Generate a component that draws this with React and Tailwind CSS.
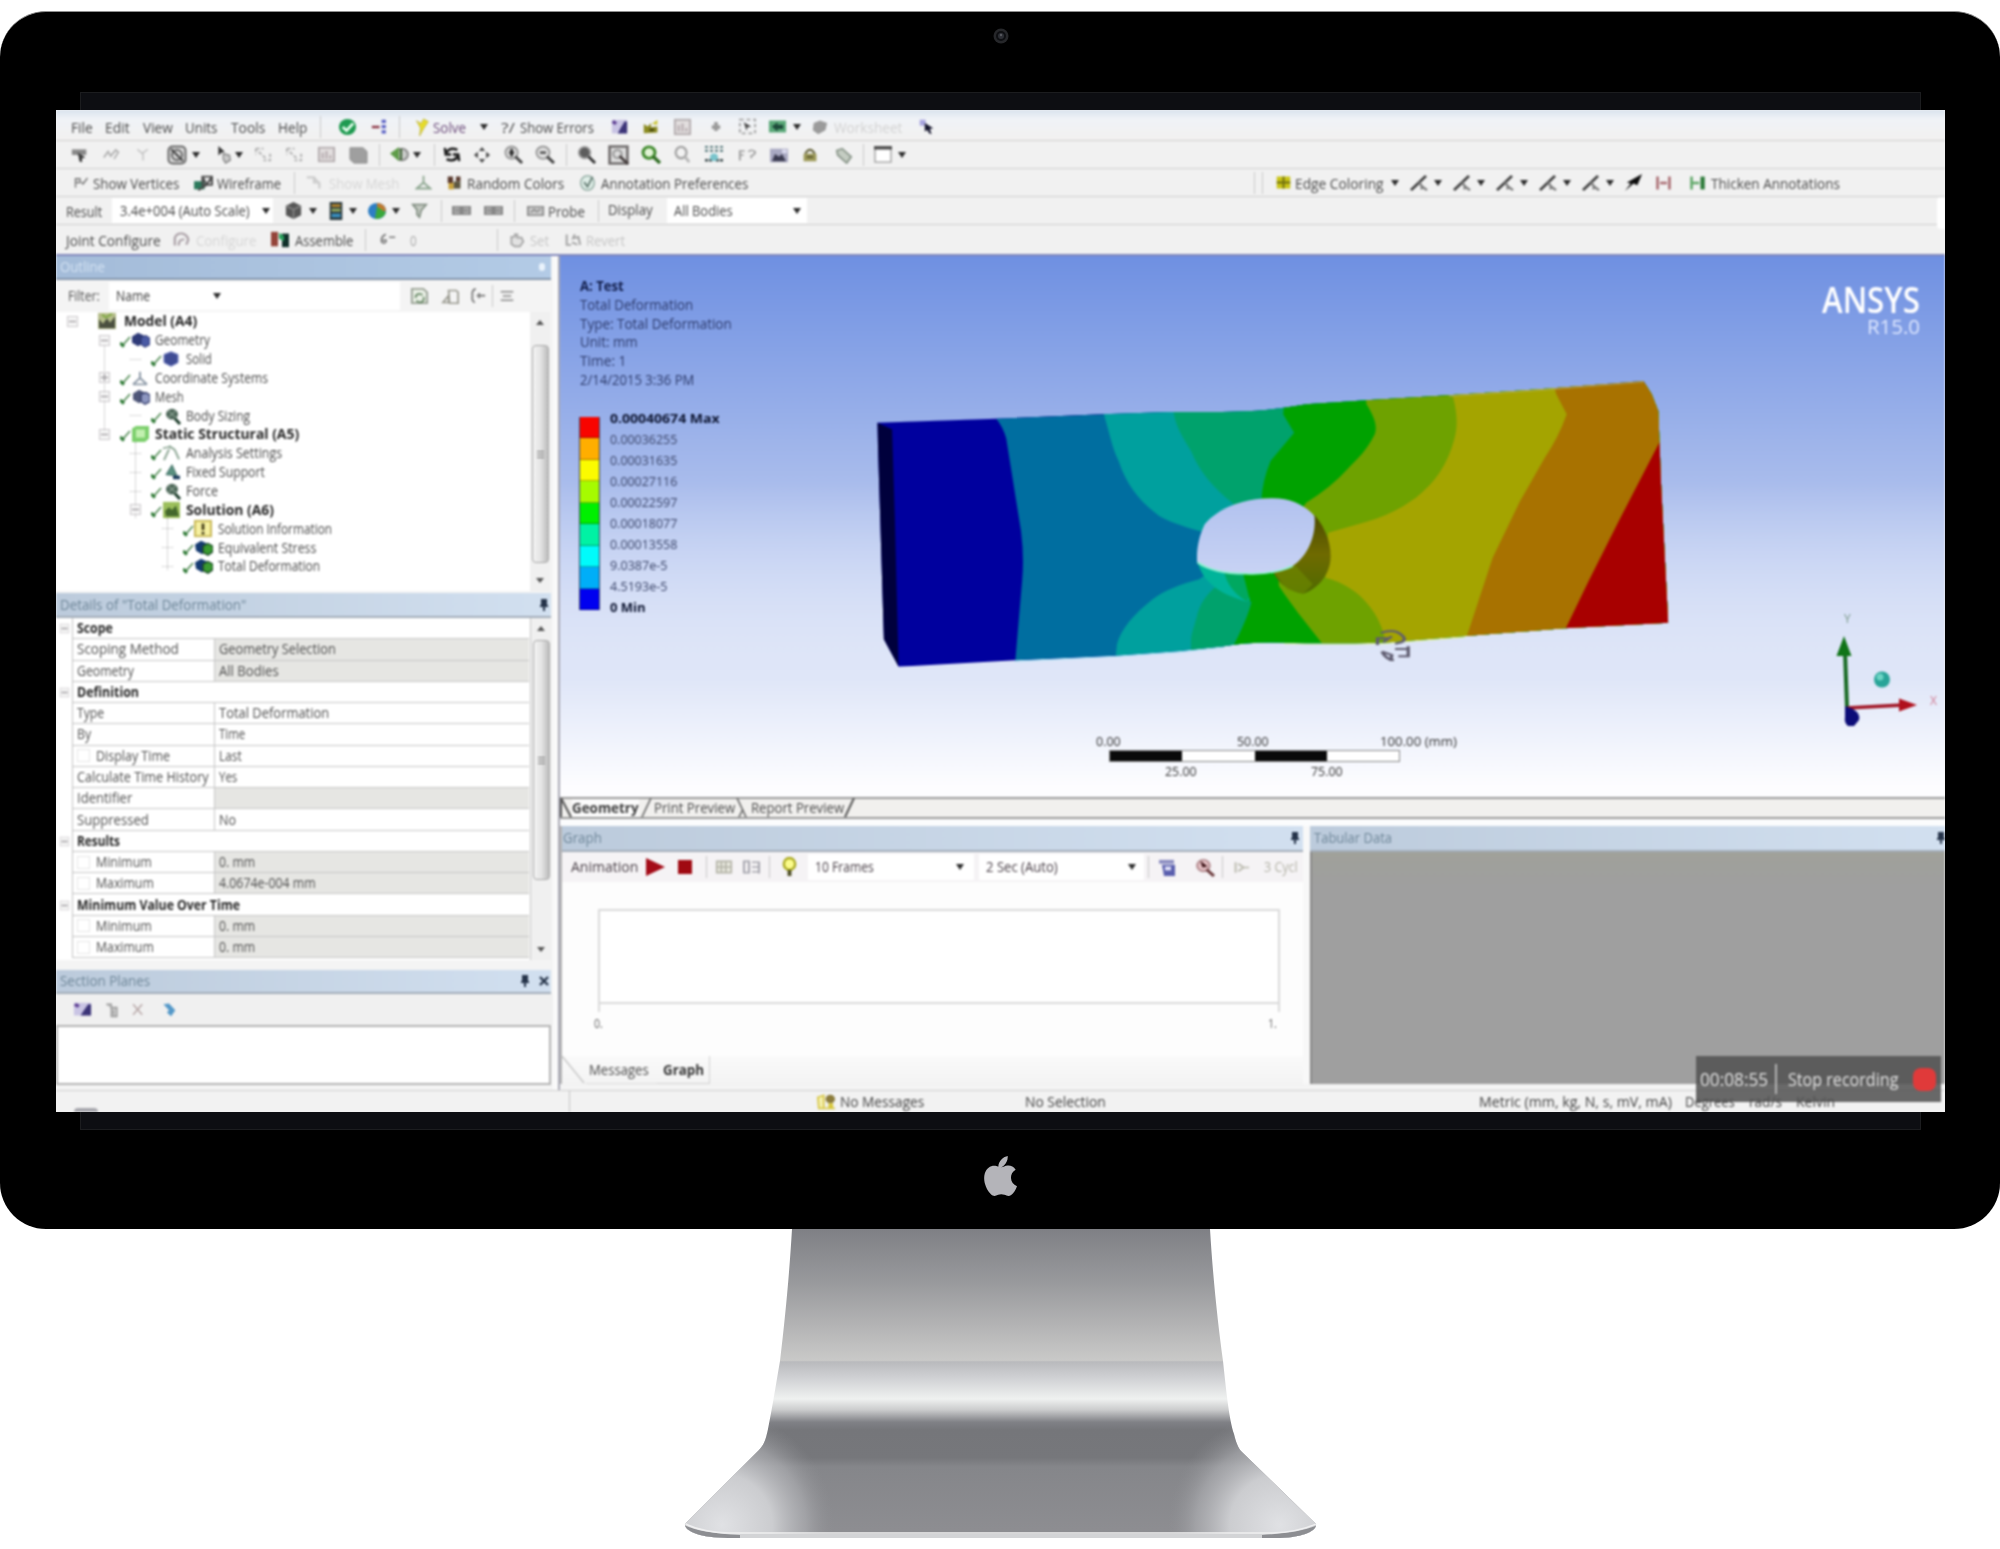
import { useLayoutEffect, useRef, useState } from "react";

/* Single-line label squeezed or stretched to the width of its box. */
function T({ className = "", children }) {
  const box = useRef(null);
  const txt = useRef(null);
  const [k, setK] = useState(1);
  useLayoutEffect(() => {
    if (txt.current && txt.current.offsetWidth) {
      setK(box.current.offsetWidth / txt.current.offsetWidth);
    }
  }, []);
  return (
    <span ref={box} className={"block shrink-0 whitespace-nowrap leading-[18px] " + className}>
      <span ref={txt} className="inline-block origin-left" style={{ transform: `scaleX(${k})` }}>
        {children}
      </span>
    </span>
  );
}

const GLYPHS = {
  check: (
    <>
      <circle cx="10" cy="10" r="9" fill="#1e9a50" />
      <path d="M5 10l4 4 7-8" stroke="#e8fff0" strokeWidth="3" fill="none" />
    </>
  ),
  branch: (
    <>
      <path d="M1 10h9" stroke="#8a3444" strokeWidth="3" />
      <path d="M15 1v18" stroke="#5a60c4" strokeWidth="5" strokeDasharray="4 2.500" />
    </>
  ),
  bolt: <path d="M3 3l6 3 3-5 6 3-6 8-5 8 1-9z" fill="#e6dc28" stroke="#c2b850" />,
  newplane: (
    <>
      <rect x="1" y="1" width="18" height="17" fill="#c9c4e4" />
      <path d="M19 3v15H8l3-6 5-9z" fill="#3c3478" />
      <path d="M2 3l4 3" stroke="#5c3c90" strokeWidth="4" />
    </>
  ),
  chart: (
    <>
      <path d="M1 18V7l5 3 4-4v5l8-1v7z" fill="#8c8c22" />
      <path d="M11 7l7-5v6z" fill="#c9c430" />
      <path d="M8 14h6" stroke="#44440c" strokeWidth="3" />
    </>
  ),
  page: (
    <>
      <rect x="2" y="2" width="16" height="16" fill="#e2dede" stroke="#b3acae" strokeWidth="2" />
      <path d="M6 8v7M10 6v9M14 11v4" stroke="#b3a8ac" strokeWidth="2" />
    </>
  ),
  plus: <path d="M10 3v14M3 11h14" stroke="#9a9a9a" strokeWidth="6" />,
  cursorbox: (
    <>
      <rect x="2" y="2" width="16" height="16" fill="none" stroke="#a3a3a3" strokeWidth="2" strokeDasharray="4 3" />
      <path d="M6 5l8 5-4 1-1 4z" fill="#444" />
    </>
  ),
  green: (
    <>
      <rect x="1" y="3" width="18" height="14" fill="#5aa878" />
      <path d="M4 10l6-5v3h6v5h-6v3z" fill="#1d4a3a" />
    </>
  ),
  sheet: <path d="M3 5l7-3 8 3-2 9-8 5-6-5z" fill="#9b9b9b" />,
  help: (
    <>
      <path d="M2 2h7v7H2z" fill="#a9a6e0" />
      <path d="M8 6l10 6-4 1 2 6-3-1-2-4-3 2z" fill="#16162e" />
    </>
  ),
  select: (
    <>
      <path d="M1 3h17v7H1z" fill="#8a8a8a" />
      <path d="M8 7l9 6-4 1v5l-3-1z" fill="#3b3b3b" />
    </>
  ),
  faint: <path d="M1 14l5-8 3 6 6-8 3 3-5 9" stroke="#adadad" strokeWidth="2" fill="none" />,
  faint2: <path d="M3 3l6 5 7-5M10 8v9" stroke="#c6c6c6" strokeWidth="2" fill="none" />,
  cube: (
    <>
      <rect x="1.5" y="1.5" width="17" height="17" rx="4" fill="#d9d9d9" stroke="#6a6a6a" strokeWidth="2" />
      <circle cx="10" cy="10" r="5" fill="none" stroke="#666" strokeWidth="2" />
      <path d="M4 4l12 12" stroke="#444" strokeWidth="2" />
    </>
  ),
  pick: (
    <>
      <path d="M3 1l8 6-4 1-4 3z" fill="#333" />
      <path d="M9 9l8 2 1 5-6 3-3-4z" fill="#c9c9c9" stroke="#8a8a8a" strokeWidth="1.600" />
    </>
  ),
  dots: (
    <>
      <path d="M2 3h8M2 3v7M5 7l8 8M17 9v8h-7" stroke="#b0b0b0" strokeWidth="2" fill="none" strokeDasharray="4 2" />
    </>
  ),
  solid: <path d="M2 2h13l4 4v13H6l-4-4z" fill="#9f9f9f" stroke="#8c8c8c" />,
  plane: (
    <>
      <circle cx="13" cy="10" r="6" fill="#c9cbc9" stroke="#8d8d8d" strokeWidth="2" />
      <path d="M1 9l9-7v15z" fill="#5e9c48" />
      <path d="M12 4v12" stroke="#3b6030" strokeWidth="2" />
    </>
  ),
  rotate: (
    <path d="M4 8q3-6 12-3M16 12q-3 6-12 3M2 3l1 7h6M18 17l-1-7h-6" stroke="#161616" strokeWidth="2.600" fill="none" />
  ),
  move: (
    <path d="M10 1l3.500 4.500h-7zM10 19l3.500-4.500h-7zM1 10l4.500-3.500v7zM19 10l-4.500-3.500v7z" fill="#4b4b4b" />
  ),
  zoomin: (
    <>
      <circle cx="8" cy="8" r="6.500" fill="#d8d8d8" stroke="#9b9b9b" strokeWidth="2" />
      <path d="M8 4v8M5.500 8h5" stroke="#222" strokeWidth="2.400" />
      <path d="M12 12l7 7" stroke="#444" strokeWidth="3" />
    </>
  ),
  zoomout: (
    <>
      <circle cx="8" cy="8" r="6.500" fill="#e0e0e0" stroke="#9b9b9b" strokeWidth="2" />
      <path d="M5 8h6" stroke="#444" strokeWidth="2.400" />
      <path d="M12 12l7 7" stroke="#444" strokeWidth="3" />
    </>
  ),
  zoomdark: (
    <>
      <circle cx="8" cy="8" r="6" fill="#5c5c5c" stroke="#9a9a9a" strokeWidth="2" />
      <path d="M12 12l7 7" stroke="#333" strokeWidth="3" />
    </>
  ),
  zoombox: (
    <>
      <rect x="1.500" y="1.500" width="17" height="17" fill="#ddd" stroke="#6c6868" strokeWidth="2.400" />
      <circle cx="9" cy="9" r="4" fill="none" stroke="#999" strokeWidth="2" />
      <path d="M11 11l8 8" stroke="#443c3c" strokeWidth="2.500" />
    </>
  ),
  zoomgreen: (
    <>
      <circle cx="8" cy="8" r="6" fill="#e2f4d6" stroke="#3f8a2c" strokeWidth="3" />
      <path d="M12 12l7 7" stroke="#2d6b20" strokeWidth="3.500" />
    </>
  ),
  zoomgray: (
    <>
      <circle cx="9" cy="8" r="6" fill="#f2f2f2" stroke="#a3a3a3" strokeWidth="2.500" />
      <path d="M13 12l5 6" stroke="#b5b5b5" strokeWidth="3" />
    </>
  ),
  grid: (
    <>
      <path d="M1 2h18M1 6h18" stroke="#4a6f72" strokeWidth="2" strokeDasharray="3 2" />
      <path d="M1 16h7M12 16h7" stroke="#3b4a4c" strokeWidth="2.500" strokeDasharray="3 1" />
      <circle cx="10" cy="13" r="4" fill="#79c4cc" />
    </>
  ),
  fq: <path d="M2 17V5h5M2 10h4M11 6q3-4 7 0q0 4-4 5v3" stroke="#9f9f9f" strokeWidth="2" fill="none" />,
  photo: (
    <>
      <rect x="1" y="3" width="18" height="15" fill="#a9a9c2" />
      <path d="M3 17l3-8 4 3 3-3 4 8z" fill="#3b3b50" />
      <path d="M13 4h5v4h-5z" fill="#dcdcf0" />
    </>
  ),
  box: (
    <>
      <path d="M2 9h16v9H2z" fill="#9d9a58" />
      <path d="M4 9q6-9 12 0M6 13h8" stroke="#5e5c32" strokeWidth="2.400" fill="none" />
    </>
  ),
  tag: <path d="M2 5l6-2 10 9-5 7L3 10z" fill="#c4ccc2" stroke="#8c988c" strokeWidth="2" />,
  win: (
    <>
      <rect x="2" y="2" width="16" height="16" fill="#fff" stroke="#a6a6a6" strokeWidth="1.500" />
      <path d="M1 3h18" stroke="#4a4a4a" strokeWidth="3.500" />
    </>
  ),
  pv: <path d="M2 17V5h6v5H2M10 9l2 3 6-8" stroke="#777" strokeWidth="1.800" fill="none" />,
  wire: (
    <>
      <path d="M1 8h10v9H1z" fill="#2c7a5c" />
      <path d="M9 3h9v9H9zM9 3l4 9M18 3l-5 9-8 6" stroke="#4b4b4b" strokeWidth="2" fill="none" />
    </>
  ),
  mesh: <path d="M2 4h8l6 8v5M10 4v6h7" stroke="#cdcdcd" strokeWidth="2.500" fill="none" />,
  axes: <path d="M10 2v8l-8 7h16l-8-7" stroke="#8fa892" strokeWidth="2.200" fill="none" />,
  random: (
    <>
      <path d="M1 2h7v8H1zM12 2h6v6h-6z" fill="#5a3a2e" />
      <path d="M2 10h7v8H2z" fill="#c9a23a" />
      <path d="M9 8h9v9H9z" fill="#5c5640" />
    </>
  ),
  pref: (
    <>
      <circle cx="10" cy="10" r="8" fill="#dfeee8" stroke="#98b0a7" strokeWidth="1.800" />
      <path d="M6 9l4 5 6-11" stroke="#60786f" strokeWidth="2" fill="none" />
    </>
  ),
  yellow: (
    <>
      <rect x="1" y="2" width="18" height="16" fill="#c9c416" />
      <path d="M10 2v16M1 10h18" stroke="#6f6e10" strokeWidth="2.500" />
    </>
  ),
  pen: (
    <>
      <path d="M1 18L16 2" stroke="#3f3f3f" strokeWidth="2.800" />
      <path d="M9 9l3 5 5 4M11 17l2-4" stroke="#7c7c7c" strokeWidth="2.400" fill="none" />
    </>
  ),
  arrow: <path d="M1 19l6-8-4-1L19 1l-5 12-4-2z" fill="#0c0c0c" />,
  hred: <path d="M3 2v16M17 2v16M6 10h8" stroke="#a86a70" strokeWidth="3" fill="none" />,
  hgreen: (
    <>
      <path d="M3 2v16M3 10h9" stroke="#5fa868" strokeWidth="3" />
      <path d="M16 2v16" stroke="#2b7a38" strokeWidth="5" />
    </>
  ),
  hex: (
    <>
      <path d="M10 1l8 4v10l-8 4-8-4V5z" fill="#565656" />
      <path d="M2 5l8 4 8-4M10 9v10" stroke="#8a8a8a" strokeWidth="1.500" fill="none" />
    </>
  ),
  bands: (
    <>
      <rect x="3" y="0" width="14" height="20" fill="#2b3b40" />
      <path d="M5 4h10" stroke="#b8862a" strokeWidth="3" />
      <path d="M5 9h10" stroke="#9ab060" strokeWidth="3" />
      <path d="M5 15h10" stroke="#3a90c0" strokeWidth="4" />
    </>
  ),
  ball: (
    <>
      <circle cx="10" cy="10" r="9" fill="#2d7ec4" />
      <path d="M10 1a9 9 0 0 1 9 9l-9 2z" fill="#c07a30" />
      <path d="M8 19l2-14 9 7q-3 7-11 7z" fill="#39a83a" />
    </>
  ),
  filter: <path d="M2 3h16l-6 7-2 8-3-3V9z" fill="#c2c8c0" stroke="#7c897c" strokeWidth="1.800" />,
  lbl: <path d="M1 4h8v12H1zM11 4h8v12h-8zM3 10h14" fill="#aaa" stroke="#868686" strokeWidth="2" />,
  probe: <path d="M1 4h17v12H1zM4 12l4-4 3 3 4-4" fill="#ccc" stroke="#8b8b8b" strokeWidth="2" />,
  cfg: <path d="M3 17V8q2-6 8-5 6 2 6 8l-2 5M7 17q0-8 6-7" fill="none" stroke="#aca2a8" strokeWidth="2.400" />,
  asm: (
    <>
      <path d="M1 1h7v17H1z" fill="#94443a" />
      <path d="M12 3h7v16h-7z" fill="#10302a" />
      <path d="M9 2l5 4v6l-5-3z" fill="#2aa05c" />
    </>
  ),
  six: <path d="M8 3q-6 3-5 10 3 4 5 0t-5-1M12 7h7" fill="none" stroke="#777" strokeWidth="2" />,
  hand: <path d="M4 15V6h4V3h3v4h5l2 5-4 6H8z" fill="#e2e2e2" stroke="#a3a3a3" strokeWidth="2" />,
  rev: <path d="M3 3v13h5M12 3l-2 5 6-2 2 10M9 13l6 3" fill="none" stroke="#a3a3a3" strokeWidth="2.200" />,
  refresh: (
    <>
      <path d="M2 2h12l4 4v12H2z" fill="#eaf0e6" stroke="#9aa296" strokeWidth="2" />
      <path d="M6 12a4 4 0 0 1 7-3M14 11a4 4 0 0 1-7 4" stroke="#6a8a68" strokeWidth="2" fill="none" />
    </>
  ),
  copy: <path d="M8 3h8l2 2v13H9zM2 17l6-8v8z" fill="#f4f4f4" stroke="#9a9a90" strokeWidth="1.800" />,
  tree: <path d="M8 1q-5 1-4 8-1 7 3 8M9 9h10M12 6v6" fill="none" stroke="#777" strokeWidth="2" />,
  minus: <path d="M1 4h18M1 16h18M4 10h12" stroke="#888" strokeWidth="2" />,
  frames: <path d="M2 3h16v14H2zM7 3v14M12 3v14M2 10h16" fill="#ecece2" stroke="#b4b4a8" strokeWidth="2" />,
  list: <path d="M3 3h5v14H3zM11 4h7M11 10h7M11 16h7M18 3v15" fill="none" stroke="#a6a6ae" strokeWidth="2" />,
  bulb: (
    <>
      <circle cx="10" cy="7" r="6" fill="#fbfb8c" stroke="#a9a81c" strokeWidth="2.400" />
      <path d="M8 13h4v6H8z" fill="#4a4a20" />
    </>
  ),
  save: (
    <>
      <path d="M2 2h15v4H2z" fill="#8a8cc0" />
      <path d="M5 7h13v12H7z" fill="#5a5fae" />
      <path d="M8 9h6v4H8z" fill="#e4e4fa" />
    </>
  ),
  zoomred: (
    <>
      <circle cx="9" cy="8" r="6" fill="#e8c4c8" stroke="#b48c90" strokeWidth="2" />
      <path d="M6 3l7 6-5 1z" fill="#3b1014" />
      <path d="M12 12l7 7" stroke="#6b3a3c" strokeWidth="3" />
    </>
  ),
  skip: <path d="M4 3v14M7 5l6 5-6 5M13 10h6" fill="none" stroke="#bcbcb0" strokeWidth="2.200" />,
  msg: (
    <>
      <path d="M1 5l6-2v15H2zM7 18h12" fill="#f8f4b8" stroke="#d8c84a" strokeWidth="2" />
      <circle cx="14" cy="7" r="5" fill="#8c7c3c" />
      <path d="M12 12h5v6h-5z" fill="#d8c83a" />
    </>
  ),
  del: <path d="M3 3l13 14M16 3L3 17" stroke="#b8a8a8" strokeWidth="2.200" />,
  blue: <path d="M2 3l8-1 9 9-6 8-6-5 3-3z" fill="#5498c8" />,
  copy2: <path d="M2 3h7v6M9 7h8v11H9zM12 10v6" fill="#ccc" stroke="#9b9b9b" strokeWidth="2" />,
  /* outline tree */
  model: (
    <>
      <rect x="1" y="1" width="18" height="18" fill="#b5bd8a" />
      <path d="M2 8l4 5 4-6 3 5 5-7v13H2z" fill="#4b5040" />
      <path d="M5 3l4 3 6-4" stroke="#7ea840" strokeWidth="2" fill="none" />
    </>
  ),
  geo: (
    <>
      <path d="M2 6l6-4 6 3v8l-6 4-6-4z" fill="#2e3a78" />
      <path d="M11 7l5-2 4 3v7l-5 3-4-3z" fill="#4a5aa4" stroke="#27306a" />
    </>
  ),
  sol: <path d="M10 2l7 3v9l-7 4-7-4V5z" fill="#3f4c94" stroke="#6c78c0" />,
  csys: <path d="M10 3v7l-7 7M10 10l7 7M3 17h14" stroke="#8e9aa8" strokeWidth="2" fill="none" />,
  meshi: (
    <>
      <path d="M3 6l6-4 6 3v8l-6 4-6-4z" fill="#4e5678" />
      <path d="M11 7l5-2 4 3v7l-5 3-4-3z" fill="#8d96c0" stroke="#3a4270" strokeWidth="1.500" />
    </>
  ),
  sizing: (
    <>
      <circle cx="11" cy="8" r="6" fill="#4c6658" />
      <path d="M7 4l8 8M15 4l-8 8" stroke="#a3b8a8" />
      <path d="M14 13l5 6" stroke="#1a3a28" strokeWidth="3" />
    </>
  ),
  static: (
    <>
      <path d="M2 4l4-3h13v14l-4 4H2z" fill="#7ccf6c" />
      <rect x="6" y="5" width="9" height="9" fill="#c2f0b0" />
    </>
  ),
  settings: <path d="M2 5q8-4 12 2l4 10M8 6L3 18M8 2l5 4" stroke="#8fa896" strokeWidth="2" fill="none" />,
  support: (
    <>
      <path d="M5 13l6-11 5 12z" fill="#5a9080" stroke="#3b6a60" />
      <path d="M12 14h7v4h-7z" fill="#1c3c5c" />
    </>
  ),
  solution: (
    <>
      <rect x="2" y="1" width="17" height="18" fill="#9cbf5c" />
      <path d="M4 11l4-4 3 3 4-5 3 12H5z" fill="#44682c" />
    </>
  ),
  info: (
    <>
      <rect x="2" y="1" width="16" height="17" fill="#f6f0a0" stroke="#c8b858" strokeWidth="2" />
      <path d="M10 4v7M10 13v3" stroke="#3b3410" strokeWidth="2.600" />
    </>
  ),
  result: (
    <>
      <path d="M2 6l6-4 6 3v8l-5 4-6-4z" fill="#143a70" />
      <path d="M10 8l5-3 5 3v6l-5 4-5-3z" fill="#3a9a30" stroke="#1c4a28" strokeWidth="1.500" />
    </>
  ),
};

function Ico({ n, className = "" }) {
  return (
    <svg viewBox="0 0 20 20" preserveAspectRatio="none" className={"block shrink-0 " + className}>
      {GLYPHS[n]}
    </svg>
  );
}
function Caret({ className = "" }) {
  return (
    <svg viewBox="0 0 8 6" className={"block h-[6px] w-[8px] shrink-0 " + className}>
      <path d="M0 0h8L4 6z" fill="#2b2b2b" />
    </svg>
  );
}
function Sep({ className = "" }) {
  return <span className={"block h-[22px] w-px shrink-0 bg-[#c9c9c9] " + className} />;
}
function Pin({ className = "" }) {
  return (
    <svg viewBox="0 0 8 12" className={"block h-[12px] w-[8px] shrink-0 " + className}>
      <path d="M1 0h6v6h1v2H5v4H3V8H0V6h1z" fill="#26344a" />
    </svg>
  );
}

function Toolbars() {
  const row = "flex items-center border-b border-[#cfcfcf] bg-[#f1f1f1] pl-[15px] ";
  return (
    <div className="shrink-0 text-[15px] text-[#4a4a4a]">
      <div className={row + "h-[31px] bg-linear-to-b from-[#d9e3ee] via-[#f0f3f7] via-30% to-[#f2f1f0] pt-[3px]"}>
        <T className="w-[22px]">File</T>
        <T className="ml-3 w-[25px]">Edit</T>
        <T className="ml-[13px] w-[30px]">View</T>
        <T className="ml-3 w-[32px]">Units</T>
        <T className="ml-[14px] w-[34px]">Tools</T>
        <T className="ml-[13px] w-[29px]">Help</T>
        <Sep className="ml-[13px]" />
        <Ico n="check" className="ml-[17px] h-[18px] w-[19px]" />
        <Ico n="branch" className="ml-[14px] h-4 w-[17px]" />
        <Sep className="ml-[11px]" />
        <Ico n="bolt" className="ml-[14px] h-[18px] w-[16px]" />
        <T className="ml-[3px] w-[33px] text-[#6b4a7a]">Solve</T>
        <Caret className="ml-[14px]" />
        <T className="ml-[13px] w-[14px]">?/</T>
        <T className="ml-[5px] w-[74px]">Show Errors</T>
        <Ico n="newplane" className="ml-[17px] h-[16px] w-[17px]" />
        <Ico n="chart" className="ml-[15px] h-[17px] w-[16px]" />
        <Ico n="page" className="ml-[14px] h-[18px] w-[19px]" />
        <Ico n="plus" className="ml-[18px] h-[13px] w-[12px]" />
        <Ico n="cursorbox" className="ml-[16px] h-[17px] w-[19px]" />
        <Ico n="green" className="ml-[11px] h-[17px] w-[19px]" />
        <Caret className="ml-[6px]" />
        <Ico n="sheet" className="ml-[10px] h-[16px] w-[18px]" />
        <T className="ml-[5px] w-[68px] text-[#d2d2d2]">Worksheet</T>
        <Ico n="help" className="ml-[16px] h-[17px] w-[17px]" />
      </div>
      <div className={row + "h-[28px]"}>
        <Ico n="select" className="h-4 w-[17px]" />
        <Ico n="faint" className="ml-[15px] h-[15px] w-[17px]" />
        <Ico n="faint2" className="ml-[15px] h-4 w-[16px]" />
        <Ico n="cube" className="ml-[16px] h-[20px] w-[20px]" />
        <Caret className="ml-[5px]" />
        <Ico n="pick" className="ml-[16px] h-[19px] w-[16px]" />
        <Caret className="ml-[3px]" />
        <Ico n="dots" className="ml-[11px] h-[17px] w-[19px]" />
        <Ico n="dots" className="ml-[12px] h-[17px] w-[19px]" />
        <Ico n="page" className="ml-[13px] h-[17px] w-[19px]" />
        <Ico n="solid" className="ml-[12px] h-[18px] w-[20px]" />
        <Sep className="ml-[11px]" />
        <Ico n="plane" className="ml-[9px] h-[19px] w-[20px]" />
        <Caret className="ml-[4px]" />
        <Sep className="ml-[13px]" />
        <Ico n="rotate" className="ml-[8px] h-[19px] w-[18px]" />
        <Ico n="move" className="ml-[12px] h-[18px] w-[18px]" />
        <Ico n="zoomin" className="ml-[13px] h-[19px] w-[19px]" />
        <Ico n="zoomout" className="ml-[12px] h-[19px] w-[20px]" />
        <Sep className="ml-[11px]" />
        <Ico n="zoomdark" className="ml-[10px] h-[19px] w-[19px]" />
        <Ico n="zoombox" className="ml-[12px] h-[20px] w-[21px]" />
        <Ico n="zoomgreen" className="ml-[12px] h-[19px] w-[20px]" />
        <Ico n="zoomgray" className="ml-[12px] h-[19px] w-[18px]" />
        <Ico n="grid" className="ml-[13px] h-[19px] w-[20px]" />
        <Ico n="fq" className="ml-[14px] h-[16px] w-[19px]" />
        <Ico n="photo" className="ml-[12px] h-[18px] w-[20px]" />
        <Ico n="box" className="ml-[13px] h-[17px] w-[16px]" />
        <Ico n="tag" className="ml-[17px] h-[18px] w-[18px]" />
        <Sep className="ml-[10px]" />
        <Ico n="win" className="ml-[9px] h-[19px] w-[20px]" />
        <Caret className="ml-[5px]" />
      </div>
      <div className={row + "h-[28px]"}>
        <Ico n="pv" className="ml-[3px] h-[15px] w-[15px]" />
        <T className="ml-[4px] w-[86px]">Show Vertices</T>
        <Ico n="wire" className="ml-[14px] h-[18px] w-[21px]" />
        <T className="ml-[3px] w-[64px]">Wireframe</T>
        <Sep className="ml-[13px]" />
        <Ico n="mesh" className="ml-[10px] h-[17px] w-[18px]" />
        <T className="ml-[6px] w-[70px] text-[#d6d6d6]">Show Mesh</T>
        <Ico n="axes" className="ml-[16px] h-[17px] w-[17px]" />
        <Ico n="random" className="ml-[15px] h-[16px] w-[15px]" />
        <T className="ml-[5px] w-[97px]">Random Colors</T>
        <Ico n="pref" className="ml-[15px] h-[18px] w-[17px]" />
        <T className="ml-[5px] w-[147px]">Annotation Preferences</T>
        <Sep className="ml-[506px]" />
        <Sep className="ml-[7px]" />
        <Ico n="yellow" className="ml-[13px] h-[15px] w-[15px]" />
        <T className="ml-[4px] w-[89px]">Edge Coloring</T>
        <Caret className="ml-[7px]" />
        {[0, 1, 2, 3, 4].map((i) => (
          <span key={i} className="ml-[11px] flex items-center">
            <Ico n="pen" className="h-[18px] w-[20px]" />
            <Caret className="ml-[4px] w-[8px]" />
          </span>
        ))}
        <Ico n="arrow" className="ml-[10px] h-[19px] w-[19px]" />
        <Ico n="hred" className="ml-[12px] h-[16px] w-[17px]" />
        <Ico n="hgreen" className="ml-[17px] h-[16px] w-[17px]" />
        <T className="ml-[5px] w-[129px]">Thicken Annotations</T>
      </div>
      <div className={row + "relative h-[28px]"}>
        <T className="-ml-[5px] w-[36px]">Result</T>
        <span className="ml-[10px] flex h-[25px] w-[161px] items-center bg-white pl-2 text-[14px]">
          <T className="w-[130px]">3.4e+004 (Auto Scale)</T>
          <Caret className="ml-[12px]" />
        </span>
        <Ico n="hex" className="ml-[11px] h-[19px] w-[19px]" />
        <Caret className="ml-[6px]" />
        <Ico n="bands" className="ml-[10px] h-[18px] w-[18px]" />
        <Caret className="ml-[4px]" />
        <Ico n="ball" className="ml-[10px] h-[18px] w-[20px]" />
        <Caret className="ml-[5px]" />
        <Ico n="filter" className="ml-[11px] h-[17px] w-[17px]" />
        <Sep className="ml-[13px]" />
        <Ico n="lbl" className="ml-[10px] h-[13px] w-[19px]" />
        <Ico n="lbl" className="ml-[13px] h-[13px] w-[19px]" />
        <Sep className="ml-[11px]" />
        <Ico n="probe" className="ml-[12px] h-[14px] w-[18px]" />
        <T className="ml-[3px] w-[37px]">Probe</T>
        <Sep className="ml-[13px]" />
        <T className="-mt-1 ml-[9px] w-[45px]">Display</T>
        <span className="ml-[14px] flex h-[25px] w-[140px] items-center bg-white pl-[7px] text-[14px]">
          <T className="w-[59px]">All Bodies</T>
          <Caret className="ml-[60px]" />
        </span>
        <span className="absolute right-0 top-0 h-[32px] w-[8px] rounded-l bg-white" />
      </div>
      <div className={row + "h-[31px] border-b-2 border-b-[#8288bc]"}>
        <T className="-ml-[5px] w-[95px]">Joint Configure</T>
        <Ico n="cfg" className="ml-[11px] h-[17px] w-[19px]" />
        <T className="ml-[5px] w-[60px] text-[#d6d6d6]">Configure</T>
        <Ico n="asm" className="ml-[14px] h-[17px] w-[20px]" />
        <T className="ml-[5px] w-[58px]">Assemble</T>
        <Sep className="ml-[12px]" />
        <Ico n="six" className="ml-[13px] h-[15px] w-[17px]" />
        <T className="ml-[14px] w-[7px] text-[#aaa]">0</T>
        <Sep className="ml-[80px]" />
        <Ico n="hand" className="ml-[10px] h-[16px] w-[17px]" />
        <T className="ml-[5px] w-[19px] text-[#c6c6c6]">Set</T>
        <Ico n="rev" className="ml-[15px] h-[16px] w-[18px]" />
        <T className="ml-[4px] w-[39px] text-[#c6c6c6]">Revert</T>
      </div>
    </div>
  );
}

function Expander({ plus, className = "" }) {
  return (
    <svg viewBox="0 0 11 11" className={"block h-[11px] w-[11px] shrink-0 opacity-80 " + className}>
      <rect x=".5" y=".5" width="10" height="10" fill="#f4f4f4" stroke="#c0bcc0" />
      <path d={plus ? "M2 5.500h7M5.500 2v7" : "M2 5.500h7"} stroke="#8a868c" strokeWidth="1.400" />
    </svg>
  );
}

/* [label, indent, expander, icon, label width, bold] */
const TREE = [
  ["Model (A4)", "ml-[11px]", "-", "model", "w-[73px]", true],
  ["Geometry", "ml-[43px]", "-", "geo", "w-[55px]"],
  ["Solid", "ml-[74px]", "", "sol", "w-[26px]"],
  ["Coordinate Systems", "ml-[43px]", "+", "csys", "w-[113px]"],
  ["Mesh", "ml-[43px]", "-", "meshi", "w-[29px]"],
  ["Body Sizing", "ml-[74px]", "", "sizing", "w-[64px]"],
  ["Static Structural (A5)", "ml-[43px]", "-", "static", "w-[144px]", true],
  ["Analysis Settings", "ml-[74px]", "", "settings", "w-[96px]"],
  ["Fixed Support", "ml-[74px]", "", "support", "w-[79px]"],
  ["Force", "ml-[74px]", "", "sizing", "w-[32px]"],
  ["Solution (A6)", "ml-[74px]", "-", "solution", "w-[88px]", true],
  ["Solution Information", "ml-[106px]", "", "info", "w-[114px]"],
  ["Equivalent Stress", "ml-[106px]", "", "result", "w-[98px]"],
  ["Total Deformation", "ml-[106px]", "", "result", "w-[102px]"],
];

function TreeRow({ row }) {
  const [label, indent, exp, icon, w, bold] = row;
  const root = icon === "model";
  return (
    <div className={"flex h-[18.850px] items-center text-[14px] text-[#4b4b4b] " + indent}>
      {exp ? (
        <Expander plus={exp === "+"} />
      ) : (
        <span className="block w-[11px] shrink-0 border-t border-dotted border-[#b5b5b5]" />
      )}
      {root ? (
        <span className="w-[19px]" />
      ) : (
        <svg viewBox="0 0 12 16" className="ml-[10px] block h-[16px] w-[12px] shrink-0">
          <path d="M2 14L10 5" stroke="#4f8a52" strokeWidth="1.600" />
          <path d="M0 11l4 3.500" stroke="#2f7a36" strokeWidth="3" />
        </svg>
      )}
      <Ico n={icon} className={"h-[18px] w-[20px] " + (root ? "" : "-ml-[2px]")} />
      <T className={w + (root ? " ml-[7px]" : " ml-[5px]") + (bold ? " font-bold text-[#262626]" : "")}>{label}</T>
    </div>
  );
}

function Scroll({ thumb }) {
  return (
    <div className="flex w-[20px] shrink-0 flex-col items-center bg-[#f0f0f0] py-[8px]">
      <svg viewBox="0 0 8 5" className="h-[5px] w-[8px]"><path d="M0 5h8L4 0z" fill="#555" /></svg>
      <div className={"flex w-[17px] flex-col items-center justify-center gap-[2px] rounded-sm border border-[#a9a9a9] bg-linear-to-r from-[#f4f4f4] via-[#e4e4e4] to-[#bcbcbc] " + thumb}>
        <span className="h-px w-[7px] bg-[#777]" />
        <span className="h-px w-[7px] bg-[#777]" />
        <span className="h-px w-[7px] bg-[#777]" />
      </div>
      <svg viewBox="0 0 8 5" className="mt-auto h-[5px] w-[8px]"><path d="M0 0h8L4 5z" fill="#555" /></svg>
    </div>
  );
}

/* [kind, label, label width, value, value width, shaded] */
const DETAILS = [
  ["h", "Scope", "w-[36px]"],
  ["r", "Scoping Method", "w-[102px]", "Geometry Selection", "w-[117px]", true],
  ["r", "Geometry", "w-[57px]", "All Bodies", "w-[60px]", true],
  ["h", "Definition", "w-[62px]"],
  ["r", "Type", "w-[27px]", "Total Deformation", "w-[110px]"],
  ["r", "By", "w-[14px]", "Time", "w-[26px]"],
  ["c", "Display Time", "w-[74px]", "Last", "w-[23px]"],
  ["r", "Calculate Time History", "w-[132px]", "Yes", "w-[18px]"],
  ["r", "Identifier", "w-[55px]", "", "w-[1px]", true],
  ["r", "Suppressed", "w-[72px]", "No", "w-[17px]"],
  ["h", "Results", "w-[43px]"],
  ["c", "Minimum", "w-[56px]", "0. mm", "w-[36px]", true],
  ["c", "Maximum", "w-[58px]", "4.0674e-004 mm", "w-[97px]", true],
  ["h", "Minimum Value Over Time", "w-[163px]"],
  ["c", "Minimum", "w-[56px]", "0. mm", "w-[36px]", true],
  ["c", "Maximum", "w-[58px]", "0. mm", "w-[36px]", true],
];

function DetailRow({ row }) {
  const [kind, label, w, value, vw, shaded] = row;
  return (
    <div className="flex h-[21.280px] items-stretch text-[14px] text-[#505050]">
      <div className="flex w-[17px] shrink-0 items-center justify-center border-r border-[#c2c2c2]">
        {kind === "h" && <Expander className="scale-90" />}
      </div>
      {kind === "h" ? (
        <div className="flex flex-1 items-center border-b border-[#c6c6c6] pl-1 font-bold text-[#262626]">
          <T className={w}>{label}</T>
        </div>
      ) : (
        <>
          <div className="flex w-[142px] shrink-0 items-center border-b border-r border-[#c6c6c6] pl-1">
            {kind === "c" && <span className="mr-[6px] h-[13px] w-[13px] border border-[#e6e6e6]" />}
            <T className={w}>{label}</T>
          </div>
          <div className={"flex flex-1 items-center border-b border-[#c6c6c6] pl-[4px] " + (shaded ? "bg-[#e6e6e3]" : "bg-white")}>
            {value ? <T className={vw}>{value}</T> : null}
          </div>
        </>
      )}
    </div>
  );
}

function Header({ children, className = "" }) {
  return (
    <div className={"flex shrink-0 items-center border-b-2 border-[#a3adb9] bg-linear-to-r from-[#bccbdc] to-[#d2e0f0] text-[14px] text-[#6f8799] " + className}>
      {children}
    </div>
  );
}

function LeftColumn() {
  return (
    <div className="flex w-[497px] shrink-0 flex-col bg-[#f4f4f4]">
      <div className="mr-[2px] flex h-[24px] shrink-0 items-center border-b-2 border-[#8496ac] bg-linear-to-r from-[#a4bcd9] to-[#b3cbe6] pl-1 pr-[6px] text-[14px] text-[#d3e2f2]">
        <T className="w-[45px]">Outline</T>
        <span className="ml-auto h-[8px] w-[6px] rounded-full bg-[#eaf3fc]" />
      </div>
      <div className="flex h-[32px] shrink-0 items-center pl-3 text-[14px] text-[#555]">
        <T className="w-[32px]">Filter:</T>
        <span className="ml-[9px] flex h-[28px] w-[291px] items-center bg-white pl-[7px] text-[#3b3b3b]">
          <T className="w-[34px]">Name</T>
          <Caret className="ml-[63px]" />
        </span>
        <Ico n="refresh" className="ml-[10px] h-[18px] w-[19px]" />
        <Ico n="copy" className="ml-[12px] h-[17px] w-[19px]" />
        <Ico n="tree" className="ml-[9px] h-[17px] w-[17px]" />
        <Sep className="ml-[6px]" />
        <Ico n="minus" className="ml-[7px] h-[14px] w-[14px]" />
      </div>
      <div className="flex h-[279px] shrink-0 bg-white">
        <div className="relative flex-1">
          <span className="absolute left-[48px] top-[34px] h-[85px] border-l border-dotted border-[#b5b5b5]" />
          <span className="absolute left-[79px] top-[130px] h-[76px] border-l border-dotted border-[#b5b5b5]" />
          <span className="absolute left-[111px] top-[206px] h-[52px] border-l border-dotted border-[#b5b5b5]" />
          {TREE.map((r) => (
            <TreeRow key={r[0]} row={r} />
          ))}
        </div>
        <Scroll thumb="mt-[20px] h-[218px]" />
        <span className="w-[3px] bg-[#f4f4f4]" />
      </div>
      <Header className="mr-[2px] mt-[2px] h-[25px] pl-1 pr-[3px]">
        <T className="w-[186px]">Details of &quot;Total Deformation&quot;</T>
        <Pin className="ml-auto" />
      </Header>
      <div className="flex h-[342px] shrink-0 bg-white">
        <div className="flex-1">
          {DETAILS.map((r, i) => (
            <DetailRow key={i} row={r} />
          ))}
        </div>
        <div className="ml-px flex border-l border-[#c6c6c6]">
          <Scroll thumb="mt-[9px] h-[240px]" />
        </div>
        <span className="w-[2px] bg-[#f4f4f4]" />
      </div>
      <Header className="mr-[2px] mt-[10px] h-[24px] pl-1 pr-[2px]">
        <T className="w-[90px]">Section Planes</T>
        <Pin className="ml-auto" />
        <svg viewBox="0 0 10 10" className="ml-[10px] h-[10px] w-[10px]">
          <path d="M1 1l8 8M9 1L1 9" stroke="#26344a" strokeWidth="2.400" />
        </svg>
      </Header>
      <div className="flex h-[31px] shrink-0 items-center bg-[#f0f0f0] pl-[17px]">
        <Ico n="newplane" className="h-[15px] w-[19px]" />
        <Ico n="copy2" className="ml-[13px] h-[16px] w-[14px]" />
        <Ico n="del" className="ml-[12px] h-[15px] w-[14px]" />
        <Ico n="blue" className="ml-[17px] h-[15px] w-[14px]" />
      </div>
      <div className="mr-[2px] h-[60px] shrink-0 border-2 border-[#b4b4b4] bg-white" />
    </div>
  );
}

const LEGEND = [
  ["0.00040674 Max", "w-[110px]", "bg-[#f80400]"],
  ["0.00036255", "w-[67px]", "bg-[#ffae00]"],
  ["0.00031635", "w-[67px]", "bg-[#fbfb00]"],
  ["0.00027116", "w-[67px]", "bg-[#a6fb00]"],
  ["0.00022597", "w-[67px]", "bg-[#00f000]"],
  ["0.00018077", "w-[67px]", "bg-[#00f2a4]"],
  ["0.00013558", "w-[67px]", "bg-[#00fbfb]"],
  ["9.0387e-5", "w-[58px]", "bg-[#00aef8]"],
  ["4.5193e-5", "w-[58px]", "bg-[#0000f0]"],
  ["0 Min", "w-[36px]", ""],
];

const OUTLINE =
  "M68 215L285 203L480 190L600 183Q720 184 760 179T850 160L960 148L1110 133L1300 112L1465 90L1480 130L1492 180L1497 400L1510 815L1320 832L1140 855L990 875Q880 878 810 875T700 886L620 900L500 914L320 928L107 947L80 865Z";
const HOLE = "M785 442C820 440 848 462 865 495C869 560 850 620 825 645C795 668 765 670 740 668C700 666 670 655 651 632C650 590 655 555 665 520C690 470 735 443 785 442Z";

function Model() {
  return (
    <svg viewBox="0 0 1568 1320" preserveAspectRatio="none" className="absolute left-[280px] top-[95px] h-[440px] w-[860px]">
      <defs>
        <clipPath id="part"><path d={OUTLINE} /></clipPath>
        <linearGradient id="wall" x1="0" y1="0" x2="0" y2="1">
          <stop offset="0" stopColor="#4c4a00" />
          <stop offset=".5" stopColor="#6f6a00" />
          <stop offset="1" stopColor="#4f6a00" />
        </linearGradient>
        <linearGradient id="sky" x1="0" y1="0" x2="0" y2="1">
          <stop offset="0" stopColor="#b2c2ef" />
          <stop offset="1" stopColor="#c8d3f4" />
        </linearGradient>
      </defs>
      <g clipPath="url(#part)">
        <path d="M0 0H1568V1000H0z" fill="#00009e" />
        <path d="M285 180V203Q298 230 303 262L330 540Q336 620 332 690L318 960H1568V0H285z" fill="#006ea0" />
        <path d="M475 150L482 195C492 250 496 290 508 330C522 400 545 450 582 495C610 520 635 530 655 540L760 560L655 685C620 700 590 720 570 745C535 790 512 835 505 880L500 960H1568V100z" fill="#00a09e" />
        <path d="M606 150C608 220 622 250 640 300C655 360 680 410 715 455L780 560L700 690C670 720 655 760 650 800C645 830 640 850 640 870V960H1568V100z" fill="#00a26c" />
        <path d="M812 120L808 190L828 245L785 330Q770 390 768 450L780 560L752 740Q745 800 712 900H1568V100z" fill="#00a200" />
        <path d="M955 100L960 160C975 200 980 225 975 250C960 300 945 320 925 355Q895 410 850 455L785 600L790 680Q810 730 835 785L885 890H1568V100z" fill="#6ea200" />
        <path d="M1108 100L1118 140C1126 190 1126 230 1120 265C1108 340 1085 395 1050 440C1020 475 990 500 960 512L890 545L885 680C920 695 945 725 960 755C985 800 993 850 998 900H1568V100z" fill="#a4a400" />
        <path d="M1298 80L1306 130L1325 190Q1310 260 1285 320L1240 450L1190 620L1138 880H1568V80z" fill="#a87200" />
        <path d="M1500 255L1420 510L1365 690L1318 850H1568V255z" fill="#a80000" />
        <path d="M60 210L95 235L100 500L107 960L60 880z" fill="#00003c" />
        <path d="M60 225L68 211L285 199L480 187" stroke="#000070" strokeWidth="6" fill="none" />
        <path d="M1110 133L1300 112L1465 90" stroke="#b8b878" strokeWidth="9" fill="none" opacity=".55" />
      </g>
      <path d="M651 628C660 690 690 730 742 752L790 680L740 640z" fill="#00b49a" />
      <path d="M700 660C705 700 720 730 742 752L765 675L790 660z" fill="#00a860" />
      <path d="M735 668L748 752Q775 752 800 735L800 640z" fill="#00a200" />
      <path d="M865 492C888 535 897 590 894 630C890 680 868 715 845 728C815 722 795 690 788 655z" fill="url(#wall)" />
      <path d="M788 655L828 640L862 700L845 728L815 716z" fill="#6f8c00" opacity=".6" />
      <path d={HOLE} fill="url(#sky)" />
      <path d="M652 634C672 657 704 668 740 668C765 670 795 668 825 645" stroke="#8ff0d0" strokeWidth="5" fill="none" />
      <path d="M318 931L500 917L620 903L700 889" stroke="#8fd8f0" strokeWidth="4" fill="none" opacity=".6" />
      <path d="M810 878Q900 881 990 878L1140 858" stroke="#d8f08c" strokeWidth="4" fill="none" opacity=".7" />
      <g stroke="#5f5c70" strokeWidth="6" fill="none">
        <path d="M986 846Q1010 832 1024 852T1012 878M1000 862H980V882M1006 856L990 874" />
        <path d="M1036 886V916H1018M1012 894H1036M988 902Q996 926 1010 928M988 902L1006 912L1004 930" />
      </g>
    </svg>
  );
}

function Viewport() {
  return (
    <div className="relative h-[541px] shrink-0 overflow-hidden bg-linear-to-b from-[#6f90e2] from-0% via-[#a9bcec] via-42% to-[#fdfdff] to-100%">
      <div className="absolute inset-0 bg-linear-to-b from-transparent from-42% via-[#dfe6f8] via-78% to-[#fdfdff] to-98%" />
      <Model />
      <div className="absolute left-[20px] top-[21px] flex flex-col gap-[.8px] text-[14px] text-[#2c3a6b]">
        <T className="w-[44px] font-bold text-[#101c48]">A: Test</T>
        <T className="w-[113px]">Total Deformation</T>
        <T className="w-[152px]">Type: Total Deformation</T>
        <T className="w-[58px]">Unit: mm</T>
        <T className="w-[46px]">Time: 1</T>
        <T className="w-[114px]">2/14/2015 3:36 PM</T>
      </div>
      <div className="absolute left-[19px] top-[161px] flex w-[21px] flex-col border-x border-[#404868]">
        {LEGEND.slice(0, 9).map((l) => (
          <span key={l[0]} className={"h-[21.450px] border-b border-black/30 " + l[2]} />
        ))}
      </div>
      <div className="absolute left-[50px] top-[153px] flex flex-col gap-[3px] text-[13px] text-[#3a4468]">
        {LEGEND.map((l, i) => (
          <T key={l[0]} className={l[1] + (i === 0 || i === 9 ? " font-bold text-[#0c1430]" : "")}>{l[0]}</T>
        ))}
      </div>
      <div className="absolute right-[25px] top-[27px] flex flex-col items-end text-white">
        <T className="h-[34px] w-[98px] text-[36px] font-semibold !leading-[34px]">ANSYS</T>
        <T className="w-[53px] text-[20px] text-[#dfe8ff] !leading-[20px]">R15.0</T>
      </div>
      <div className="absolute left-[536px] top-[477px] w-[362px] text-[12px] text-[#333]">
        <div className="flex">
          <T className="w-[25px]">0.00</T>
          <T className="ml-[116px] w-[32px]">50.00</T>
          <T className="ml-[111px] w-[77px]">100.00 (mm)</T>
        </div>
        <div className="-mt-px ml-[13px] flex h-[12px] w-[291px] border border-[#888] bg-white">
          <span className="w-1/4 bg-[#0a0a0a]" />
          <span className="w-1/4" />
          <span className="w-1/4 bg-[#0a0a0a]" />
        </div>
        <div className="mt-px flex">
          <T className="ml-[69px] w-[32px]">25.00</T>
          <T className="ml-[114px] w-[32px]">75.00</T>
        </div>
      </div>
      <svg viewBox="0 0 120 130" className="absolute left-[1265px] top-[350px] h-[130px] w-[120px]">
        <text x="19" y="17" fontSize="12" fill="#7c9a8c">Y</text>
        <text x="105" y="99" fontSize="12" fill="#d07c94">X</text>
        <path d="M20 45L22 102" stroke="#176a22" strokeWidth="4" />
        <path d="M19 30l7.500 20h-15z" fill="#107418" />
        <path d="M22 102L78 99" stroke="#a01424" strokeWidth="3.500" />
        <path d="M92 99l-18-6.500v13z" fill="#b0101c" />
        <circle cx="57" cy="73.500" r="8" fill="#28a498" />
        <circle cx="55" cy="71" r="3.500" fill="#6cd4c4" />
        <path d="M20 100l8 3q8 5 6 11l-5 6h-6q-4-3-3-9z" fill="#0c0c78" />
      </svg>
    </div>
  );
}

function BottomPanels() {
  return (
    <div className="flex h-[258px] shrink-0">
      <div className="flex w-[743px] shrink-0 flex-col border-l-2 border-[#b4b4b4] bg-[#fdfdfd]">
        <Header className="h-[26px] pl-px pr-[4px]">
          <T className="w-[39px]">Graph</T>
          <Pin className="ml-auto" />
        </Header>
        <div className="flex h-[30px] shrink-0 items-center overflow-hidden bg-[#f5f3f5] pl-[9px] text-[14px] text-[#4a4048]">
          <T className="w-[67px]">Animation</T>
          <svg viewBox="0 0 19 18" className="ml-[8px] h-[18px] w-[19px] shrink-0"><path d="M0 0l19 9L0 18z" fill="#a40c18" /></svg>
          <span className="ml-[13px] h-[14px] w-[14px] shrink-0 bg-[#a00a12]" />
          <Sep className="ml-[14px]" />
          <Ico n="frames" className="ml-[8px] h-[16px] w-[18px]" />
          <Ico n="list" className="ml-[8px] h-[16px] w-[20px]" />
          <Sep className="ml-[8px]" />
          <Ico n="bulb" className="ml-[10px] h-[20px] w-[19px]" />
          <span className="ml-[9px] flex h-[26px] w-[166px] shrink-0 items-center bg-white pl-[7px]">
            <T className="w-[59px]">10 Frames</T>
            <Caret className="ml-[82px]" />
          </span>
          <span className="ml-[5px] flex h-[26px] w-[165px] shrink-0 items-center bg-white pl-[7px]">
            <T className="w-[72px]">2 Sec (Auto)</T>
            <Caret className="ml-[70px]" />
          </span>
          <Sep className="ml-[4px]" />
          <Ico n="save" className="ml-[8px] h-[19px] w-[20px]" />
          <Ico n="zoomred" className="ml-[17px] h-[19px] w-[21px]" />
          <Sep className="ml-[7px]" />
          <Ico n="skip" className="ml-[9px] h-[15px] w-[18px]" />
          <T className="ml-[14px] w-[34px] text-[#b4b4a8]">3 Cycl</T>
        </div>
        <div className="ml-[36px] mt-[27px] h-[95px] w-[682px] border-2 border-[#dadada] bg-white" />
        <div className="ml-[36px] h-[8px] w-[682px] border-x-2 border-[#dadada]" />
        <div className="flex h-[20px] justify-between pl-[32px] pr-[26px] pt-[2px] text-[13px] text-[#666]">
          <T className="w-[9px]">0.</T>
          <T className="w-[9px]">1.</T>
        </div>
        <div className="mt-auto flex h-[28px] items-center bg-linear-to-b from-[#fafafa] to-[#f3f3f3] text-[14px] text-[#4a4a4a]">
          <svg viewBox="0 0 24 28" className="h-[28px] w-[24px]"><path d="M0 0L22 27" stroke="#c9c9c9" strokeWidth="1.500" /></svg>
          <span className="flex h-full items-center border-b border-[#ddd] pl-[3px] pr-[8px]"><T className="w-[60px]">Messages</T></span>
          <span className="flex h-full items-center border-b border-r border-[#d2d2d2] pl-[6px] pr-[5px] font-bold text-[#333]"><T className="w-[41px]">Graph</T></span>
        </div>
      </div>
      <div className="w-[7px] bg-[#f8f8f8]" />
      <div className="flex flex-1 flex-col">
        <Header className="h-[26px] pl-[4px]">
          <T className="w-[78px]">Tabular Data</T>
          <Pin className="ml-auto" />
        </Header>
        <div className="flex-1 border-l-2 border-[#868686] bg-linear-to-b from-[#a0a19a] to-[#9f9f9f] to-15%" />
      </div>
    </div>
  );
}

function Workspace() {
  return (
    <div className="flex min-w-0 flex-1 flex-col">
      <Viewport />
      <div className="flex h-[22px] shrink-0 items-center border-b-2 border-t-2 border-[#9a9a9a] bg-[#f1f0ee] text-[14px] text-[#4a4a4a]">
        <svg viewBox="0 0 12 20" className="h-[20px] w-[12px] shrink-0"><path d="M1 0v19M1 0l10 19" stroke="#555" strokeWidth="2" fill="none" /></svg>
        <span className="flex h-full items-center bg-[#fcfcfc]"><T className="w-[67px] font-bold text-[#3a3a3a]">Geometry</T></span>
        <svg viewBox="0 0 12 20" className="ml-[2px] h-[20px] w-[12px] shrink-0"><path d="M1 19L10 0" stroke="#666" strokeWidth="1.600" fill="none" /></svg>
        <T className="ml-[1px] w-[81px]">Print Preview</T>
        <svg viewBox="0 0 14 20" className="h-[20px] w-[14px] shrink-0"><path d="M2 0l9 19M4 19L8 11" stroke="#666" strokeWidth="1.600" fill="none" /></svg>
        <T className="ml-[2px] w-[93px]">Report Preview</T>
        <svg viewBox="0 0 12 20" className="h-[20px] w-[12px] shrink-0"><path d="M1 19L10 0" stroke="#555" strokeWidth="2" fill="none" /></svg>
      </div>
      <div className="h-[7px] shrink-0 bg-[#fbfcfd]" />
      <BottomPanels />
    </div>
  );
}

function StatusBar() {
  return (
    <div className="relative flex h-[22px] shrink-0 items-center border-t border-[#cfcfcf] bg-[#f2f2f2] text-[14px] text-[#444]">
      <span className="ml-[18px] mt-auto h-[4px] w-[24px] rounded-t-full bg-[#a6a6ac]" />
      <span className="ml-[471px] h-full w-px bg-[#c4c4c4]" />
      <Ico n="msg" className="ml-[247px] h-[17px] w-[19px]" />
      <T className="ml-[4px] w-[84px]">No Messages</T>
      <T className="ml-[101px] w-[81px]">No Selection</T>
      <T className="ml-[373px] w-[193px]">Metric (mm, kg, N, s, mV, mA)</T>
      <T className="ml-[13px] w-[50px]">Degrees</T>
      <T className="ml-[14px] w-[33px]">rad/s</T>
      <T className="ml-[14px] w-[39px]">Kelvin</T>
      <div className="absolute bottom-[10px] right-[4px] flex h-[46px] w-[245px] items-center bg-[#505050]/85 text-[18px] text-[#e4e4e4]">
        <T className="ml-[4px] w-[68px] leading-[24px]">00:08:55</T>
        <span className="ml-[7px] h-[30px] w-[2px] bg-[#b4b4b4]" />
        <T className="ml-[11px] w-[110px] leading-[24px]">Stop recording</T>
        <span className="ml-auto mr-[5px] h-[23px] w-[23px] rounded-[8px] bg-[#e03a3a]" />
      </div>
    </div>
  );
}

function Stand() {
  const shape =
    "M792 0H1210C1213 50 1218 95 1223 132C1226 160 1229 190 1234 205C1236 213 1238 219 1242 223L1316 295C1317 302 1302 309 1275 309H728C700 309 684 302 685 295L759 221C764 216 766 210 768 200C773 175 776 155 780 132C785 90 789 50 792 0Z";
  return (
    <svg viewBox="680 0 640 312" className="ml-[680px] block h-[312px] w-[640px]">
      <defs>
        <linearGradient id="metal" gradientUnits="userSpaceOnUse" x1="0" y1="0" x2="0" y2="309">
          <stop offset="0" stopColor="#7f8085" />
          <stop offset=".17" stopColor="#98999c" />
          <stop offset=".31" stopColor="#b3b3b4" />
          <stop offset=".425" stopColor="#c9c9c8" />
          <stop offset=".43" stopColor="#b9babd" />
          <stop offset=".48" stopColor="#cfd0d3" />
          <stop offset=".55" stopColor="#eff1f0" />
          <stop offset=".585" stopColor="#cbcccd" />
          <stop offset=".625" stopColor="#808186" />
          <stop offset=".65" stopColor="#75767a" />
          <stop offset=".74" stopColor="#76777b" />
          <stop offset=".77" stopColor="#85868a" />
          <stop offset="1" stopColor="#8e8e92" />
        </linearGradient>
        <radialGradient id="hl" gradientUnits="userSpaceOnUse" cx="722" cy="296" r="112">
          <stop offset="0" stopColor="#e0e1e4" />
          <stop offset=".45" stopColor="#cfd0d3" stopOpacity=".95" />
          <stop offset=".75" stopColor="#b0b1b5" stopOpacity=".6" />
          <stop offset="1" stopColor="#909195" stopOpacity="0" />
        </radialGradient>
        <radialGradient id="hr" gradientUnits="userSpaceOnUse" cx="1280" cy="296" r="112">
          <stop offset="0" stopColor="#e0e1e4" />
          <stop offset=".45" stopColor="#cfd0d3" stopOpacity=".95" />
          <stop offset=".75" stopColor="#b0b1b5" stopOpacity=".6" />
          <stop offset="1" stopColor="#909195" stopOpacity="0" />
        </radialGradient>
        <clipPath id="standclip"><path d={shape} /></clipPath>
      </defs>
      <g clipPath="url(#standclip)">
        <path d="M680 0H1320V312H680z" fill="url(#metal)" />
        <path d="M680 180H1320V312H680z" fill="url(#hl)" />
        <path d="M680 180H1320V312H680z" fill="url(#hr)" />
        <path d="M684 296Q700 304 730 305H1272Q1300 304 1318 296V312H684z" fill="#d3d4d6" />
        <path d="M684 296Q700 304 740 306V312H684zM1318 296Q1300 304 1262 306V312H1318z" fill="#8d8e92" />
        <path d="M684 294Q700 303 730 304H1272Q1300 303 1318 294" stroke="#efeff0" strokeWidth="1.500" fill="none" />
      </g>
    </svg>
  );
}

export default function App() {
  return (
    <div className="h-[1549px] w-[2000px] overflow-hidden bg-white pt-[11px] font-['Open_Sans','Noto_Sans',sans-serif]">
      <div className="flex h-[1218px] flex-col items-center rounded-[46px] border-t border-[#8f8f8f] bg-black">
        <svg viewBox="0 0 16 16" className="ml-px mt-[16px] h-[16px] w-[16px]">
          <circle cx="8" cy="8" r="7.500" fill="#26272a" />
          <circle cx="8" cy="8" r="5" fill="#0e0f12" />
          <circle cx="8" cy="8" r="3" fill="#2c2e34" />
          <circle cx="8" cy="7" r="1.200" fill="#55585e" />
        </svg>
        <div className="ml-px mt-[48px] flex h-[1038px] w-[1841px] shrink-0 flex-col items-center border border-[#1c1d1f] bg-[#0d0e12] pt-[17px]">
          <div className="h-[1002px] w-[1889px] shrink-0 overflow-hidden bg-[#f4f4f4]">
            <div className="flex h-full flex-col blur-[0.8px]">
              <Toolbars />
              <div className="flex h-[834px] shrink-0">
                <LeftColumn />
                <div className="w-[7px] shrink-0 border-r-2 border-[#a9a9b4] bg-[#fafafa]" />
                <Workspace />
              </div>
              <StatusBar />
            </div>
          </div>
        </div>
        <svg viewBox="0 0 170 208" preserveAspectRatio="none" className="mt-[26px] h-[40px] w-[33px]">
          <path fill="#b4b4b9" d="M122 0c2 20-7 36-17 47-9 10-20 15-31 14-2-18 7-34 17-44C100 7 112 2 122 0zM163 71c-16 10-25 25-24 44 1 21 12 34 31 42-7 20-18 36-30 46-13 9-23 3-35-1-11-4-22-4-32 0-14 6-24 9-36-2C8 172-6 125 4 91c10-30 32-43 55-40 12 2 21 8 30 8 10 0 19-8 33-9 17-1 31 7 41 21z" />
        </svg>
      </div>
      <Stand />
    </div>
  );
}
